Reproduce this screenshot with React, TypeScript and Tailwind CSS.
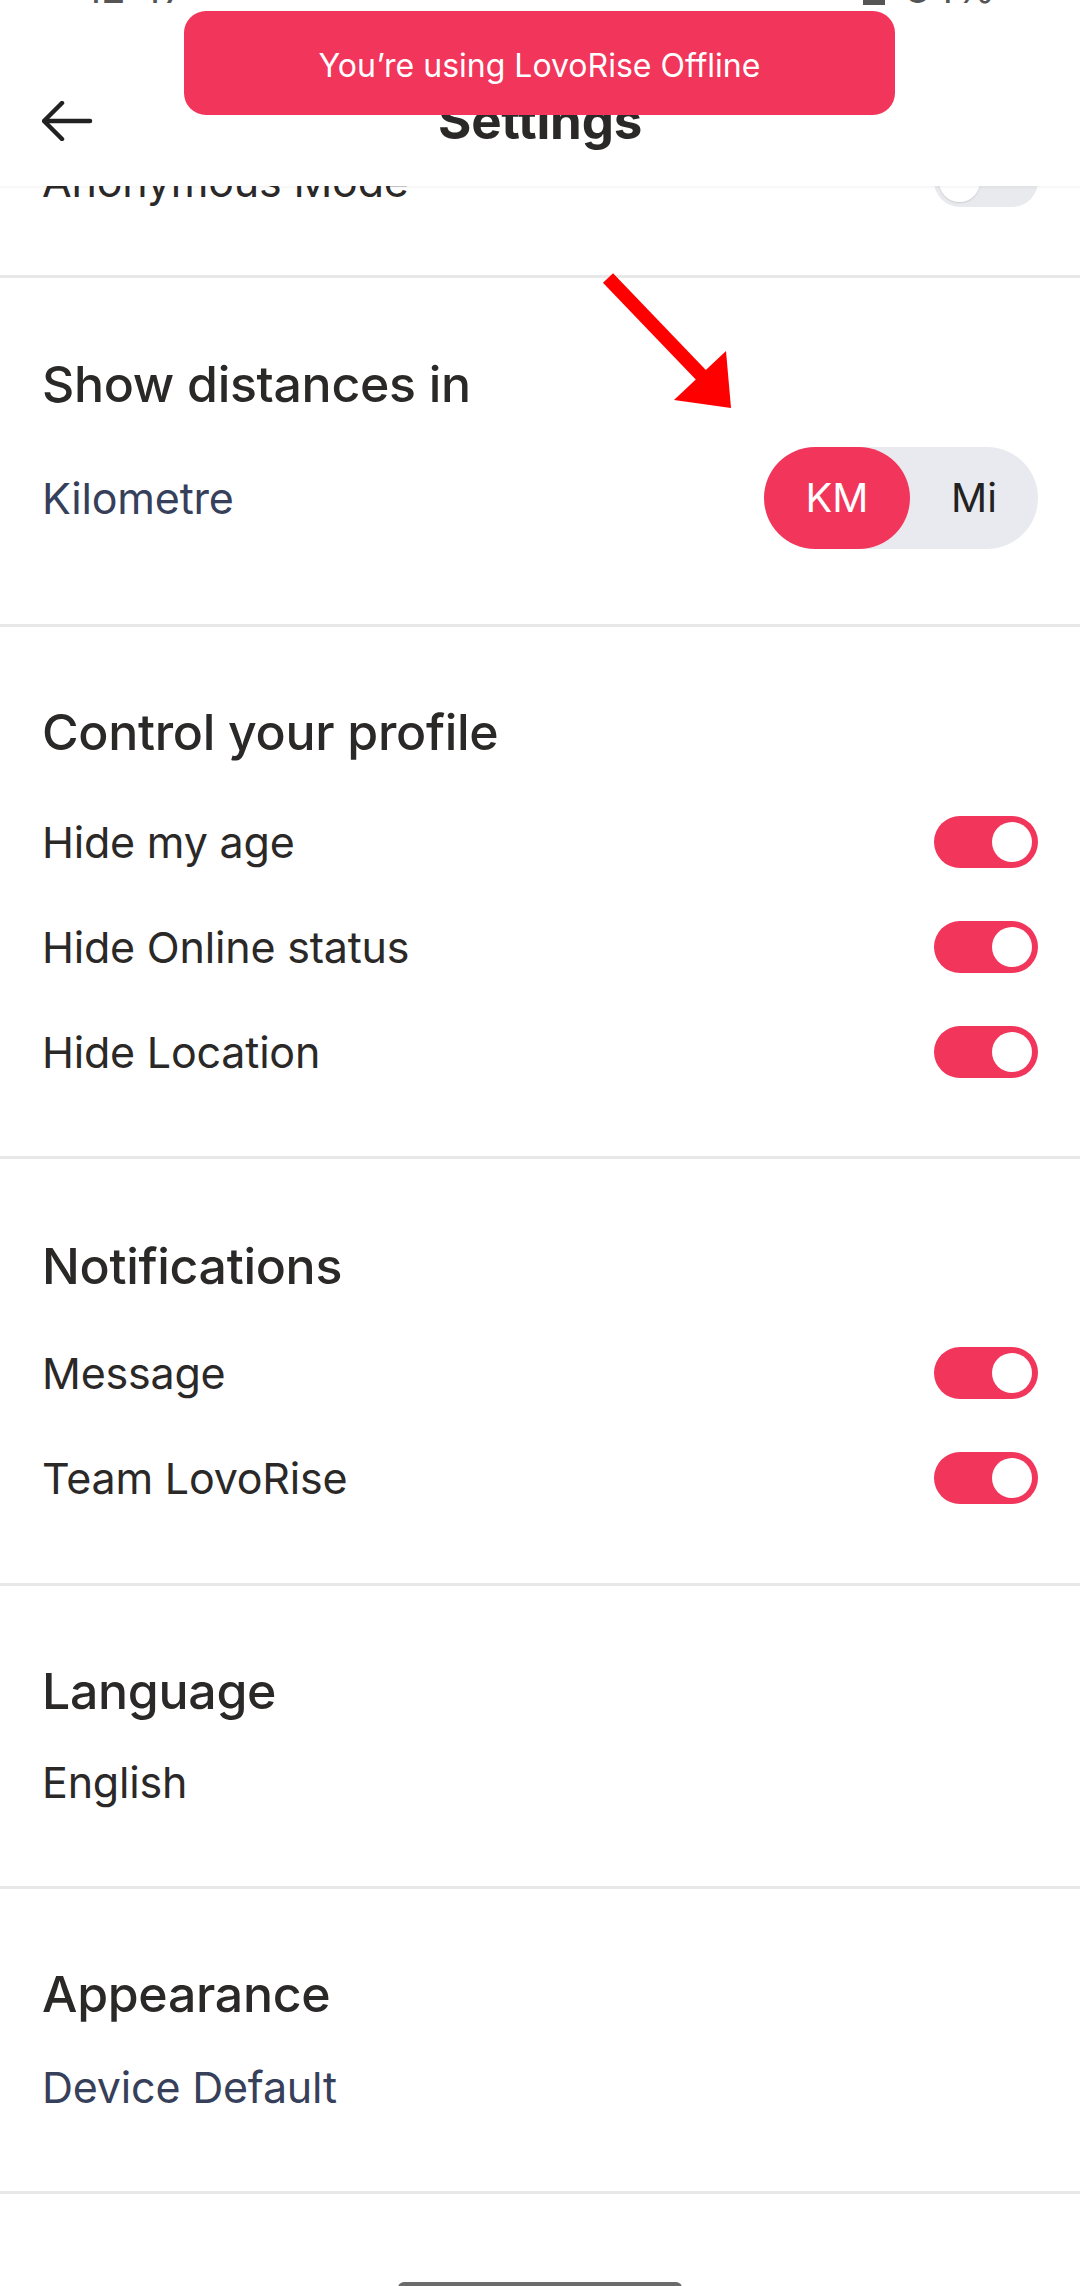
import React from "react";

const PINK = "bg-[#f2355b]";

function Toggle({ on }: { on: boolean }) {
  return on ? (
    <div className={`flex h-[52px] w-[104px] shrink-0 items-center justify-end rounded-full ${PINK} pr-[6px]`}>
      <div className="h-[40px] w-[40px] rounded-full bg-white" />
    </div>
  ) : (
    <div className="flex h-[52px] w-[104px] shrink-0 items-center justify-start rounded-full bg-[#e9eaee] pl-[5px]">
      <div className="h-[41px] w-[41px] rounded-full bg-white shadow-[0_1px_2px_rgba(0,0,0,0.12)]" />
    </div>
  );
}

function Row({ label }: { label: string }) {
  return (
    <div className="flex h-[52px] items-center justify-between">
      <span className="text-[43px] leading-[52px] tracking-[-0.2px] text-[#2b2828]">{label}</span>
      <Toggle on />
    </div>
  );
}

function Title({ children }: { children: React.ReactNode }) {
  return <h2 className="text-[50px] font-medium leading-[60px] tracking-[-0.3px] text-[#2b2828]">{children}</h2>;
}

export default function App() {
  return (
    <div
      className="relative h-[2286px] w-[1080px] overflow-hidden bg-white"
      style={{ fontFamily: "Inter, 'Noto Sans', 'Liberation Sans', sans-serif" }}
    >
      {/* Header */}
      <header className="relative z-10 flex h-[186px] flex-col bg-white shadow-[0_2px_3px_rgba(0,0,0,0.04)]">
        <div className="flex h-[5px] items-start justify-between overflow-hidden px-[85px] text-[#555]">
          <span className="-mt-[29px] text-[40px] leading-[36px]">12:47</span>
          <span className="-mt-[29px] flex items-start gap-[20px] text-[40px] leading-[36px]">
            <span className="mt-[26px] h-[10px] w-[22px] bg-[#555]" />
            <span>34%</span>
          </span>
        </div>
        <div className="mt-[76px] flex h-[80px] items-center justify-between px-[42px]">
          <div className="flex w-[60px] items-center">
            <svg width="52" height="40" viewBox="0 0 52 40" fill="none" stroke="#222" strokeWidth="4.5" strokeLinecap="round" strokeLinejoin="round">
              <path d="M20 2 L2 20 L20 38" />
              <path d="M3 20 H48" />
            </svg>
          </div>
          <h1 className="text-[51px] font-bold leading-[60px] tracking-[-0.2px] text-[#2b2828]">Settings</h1>
          <div className="w-[60px]" />
        </div>
        {/* Toast */}
        <div className={`absolute left-[184px] top-[11px] flex h-[104px] w-[711px] items-center justify-center rounded-[22px] pt-[5px] ${PINK}`}>
          <span className="text-[32px] text-white">You’re using LovoRise Offline</span>
        </div>
      </header>

      {/* Partially visible row */}
      <div className="h-[89px] overflow-hidden px-[42px]">
        <div className="-mt-[31px] flex h-[52px] items-center justify-between">
          <span className="text-[43px] leading-[52px] tracking-[-0.2px] text-[#2b2828]">Anonymous Mode</span>
          <Toggle on={false} />
        </div>
      </div>

      {/* Distances */}
      <section className="border-t-[3px] border-[#e8e8e8] px-[42px] pb-[75px] pt-[76px]">
        <Title>Show distances in</Title>
        <div className="mt-[33px] flex h-[102px] items-center justify-between">
          <span className="text-[43px] leading-[52px] tracking-[-0.2px] text-[#36405a]">Kilometre</span>
          <div className="flex h-[102px] w-[274px] rounded-full bg-[#e9eaef]">
            <div className={`flex h-[102px] w-[146px] items-center justify-center rounded-full ${PINK}`}>
              <span className="text-[40px] text-white">KM</span>
            </div>
            <div className="flex flex-1 items-center justify-center">
              <span className="text-[40px] text-[#222]">Mi</span>
            </div>
          </div>
        </div>
      </section>

      {/* Control */}
      <section className="border-t-[3px] border-[#e8e8e8] px-[42px] pb-[78px] pt-[75px]">
        <Title>Control your profile</Title>
        <div className="mt-[54px] flex flex-col gap-[53px]">
          <Row label="Hide my age" />
          <Row label="Hide Online status" />
          <Row label="Hide Location" />
        </div>
      </section>

      {/* Notifications */}
      <section className="border-t-[3px] border-[#e8e8e8] px-[42px] pb-[79px] pt-[77px]">
        <Title>Notifications</Title>
        <div className="mt-[51px] flex flex-col gap-[53px]">
          <Row label="Message" />
          <Row label="Team LovoRise" />
        </div>
      </section>

      {/* Language */}
      <section className="border-t-[3px] border-[#e8e8e8] px-[42px] pb-[78px] pt-[75px]">
        <Title>Language</Title>
        <p className="mt-[35px] text-[43px] leading-[52px] tracking-[-0.2px] text-[#2b2828]">English</p>
      </section>

      {/* Appearance */}
      <section className="border-t-[3px] border-[#e8e8e8] px-[42px] pb-[78px] pt-[75px]">
        <Title>Appearance</Title>
        <p className="mt-[37px] text-[43px] leading-[52px] tracking-[-0.2px] text-[#36405a]">Device Default</p>
      </section>

      <div className="border-t-[3px] border-[#e8e8e8]">
        <div className="mx-auto mt-[88px] h-[12px] w-[284px] rounded-t-[6px] bg-[#6b6b6b]" />
      </div>

      {/* Annotation arrow */}
      <svg className="pointer-events-none absolute left-[590px] top-[262px]" width="160" height="160" viewBox="590 262 160 160">
        <line x1="608" y1="278" x2="702" y2="376" stroke="#ff0000" strokeWidth="14" />
        <polygon points="674,400 726,351 731,408" fill="#ff0000" />
      </svg>
    </div>
  );
}
